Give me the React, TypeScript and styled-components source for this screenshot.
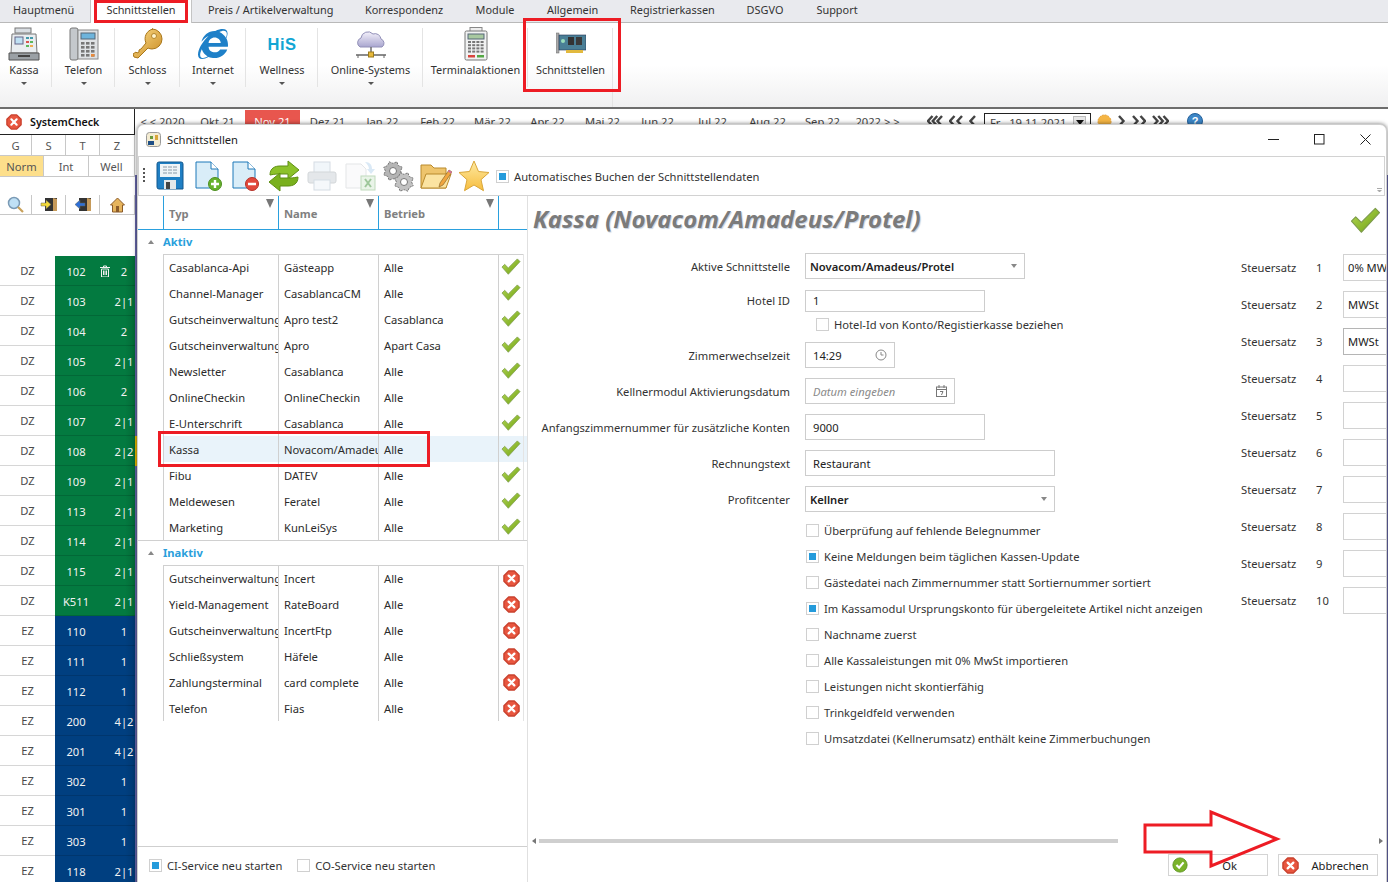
import React from "react";
import styled, { createGlobalStyle } from "styled-components";
import { FaInternetExplorer } from "react-icons/fa";

const Global = createGlobalStyle`
  html, body { margin: 0; padding: 0; background: #fff; overflow: hidden; }
  * { box-sizing: border-box; }
  body { font-family: "Noto Sans", "Open Sans", sans-serif; font-size: 11.2px; color: #333; }
`;

const Page = styled.div`
  position: relative;
  width: 1388px;
  height: 882px;
  overflow: hidden;
  display: flex;
  flex-direction: column;
`;

/* ---------- tabs + ribbon ---------- */
const TabBar = styled.div`
  display: flex;
  flex: none;
  height: 23px;
  background: #e9eaee;
  border-bottom: 1px solid #b9b9b9;
  padding-left: 13px;
  font-size: 10.9px;
`;
const Tab = styled.div<{ $w: number; $active?: boolean }>`
  width: ${(p) => p.$w}px;
  height: ${(p) => (p.$active ? 23 : 22)}px;
  margin-right: 32px;
  line-height: 20px;
  text-align: center;
  white-space: nowrap;
  color: #333;
  ${(p) => p.$active && `background:#fff; margin-left:-16px; margin-right:16px; width:${p.$w + 32}px; border-left:1px solid #c4c4c4; border-right:1px solid #c4c4c4;`}
`;
const Ribbon = styled.div`
  display: flex;
  flex: none;
  height: 86px;
  background: linear-gradient(#fff 0, #fff 50%, #f0f0f1 100%);
  padding-top: 3px;
  border-bottom: 2px solid #6d6d6d;
  font-size: 10.9px;
`;
const RibbonItem = styled.div<{ $w: number; $tall?: boolean; $pr?: number }>`
  width: ${(p) => p.$w}px;
  padding-right: ${(p) => p.$pr ?? 0}px;
  display: flex;
  flex-direction: column;
  align-items: center;
  position: relative;
  white-space: nowrap;
  &::after {
    content: "";
    position: absolute;
    right: 0;
    top: 2px;
    bottom: ${(p) => (p.$tall ? 0 : 20)}px;
    width: 1px;
    background: #e4e4e4;
  }
`;
const RibbonIcon = styled.div`
  height: 36px;
  display: flex;
  align-items: center;
  justify-content: center;
`;
const RibbonLabel = styled.div`
  line-height: 16px;
  color: #333;
`;
const Caret = styled.div`
  width: 0;
  height: 0;
  margin-top: 4px;
  border-left: 3px solid transparent;
  border-right: 3px solid transparent;
  border-top: 3px solid #555;
`;
const HisLogo = styled.span`
  font-family: "Liberation Sans", sans-serif;
  font-weight: 700;
  font-size: 16.5px;
  color: #12a5d4;
  letter-spacing: 0.5px;
`;

/* ---------- background ---------- */
const Main = styled.div`
  flex: 1;
  display: flex;
  min-height: 0;
`;
const Side = styled.aside`
  width: 135px;
  display: flex;
  flex-direction: column;
  flex: none;
  & > * { flex: none; }
`;
const SideHead = styled.div`
  height: 26px;
  display: flex;
  align-items: center;
  gap: 8px;
  padding-left: 6px;
  font-weight: 600;
  font-size: 10.7px;
  color: #111;
  border-right: 1px solid #222;
  border-bottom: 1px solid #222;
`;
const SideRow = styled.div<{ $h: number; $cols: string }>`
  height: ${(p) => p.$h}px;
  display: grid;
  grid-template-columns: ${(p) => p.$cols};
  border-bottom: 1px solid #c8c8c8;
`;
const SideCell = styled.div<{ $on?: boolean }>`
  display: flex;
  align-items: center;
  justify-content: center;
  color: #555;
  border-right: 1px solid #c8c8c8;
  background: ${(p) => (p.$on ? "#fddf8b" : "transparent")};
`;
const SideGap = styled.div<{ $h: number }>`
  height: ${(p) => p.$h}px;
`;
const Room = styled.div`
  height: 30px;
  display: grid;
  grid-template-columns: 55px 42px 16px 22px;
  border-bottom: 1px solid #d6d6d6;
  position: relative;
`;
const RoomKind = styled.div`
  display: flex;
  align-items: center;
  justify-content: center;
  color: #4a4a4a;
`;
const RoomCell = styled.div<{ $bg: string }>`
  display: flex;
  align-items: center;
  justify-content: center;
  color: #f2f2f2;
  background: ${(p) => p.$bg};
  margin-bottom: -1px;
  box-shadow: inset 0 -1px rgba(0, 0, 0, 0.14);
`;
const Marker = styled.div`
  position: absolute;
  top: 0;
  right: -3px;
  width: 3px;
  height: 30px;
  background: #e6b800;
`;
const Cal = styled.div`
  flex: 1;
  display: flex;
  flex-direction: column;
`;
const CalStrip = styled.div`
  height: 66px;
  display: flex;
  padding-top: 4px;
  background: #fff;
  align-items: flex-start;
`;
const Month = styled.div<{ $on?: boolean }>`
  width: 55px;
  height: 30px;
  margin-top: -3px;
  padding-top: 3px;
  line-height: 17px;
  text-align: center;
  white-space: nowrap;
  color: ${(p) => (p.$on ? "#fff" : "#444")};
  background: ${(p) => (p.$on ? "#e8564e" : "transparent")};
`;
const CalNav = styled.div`
  display: flex;
  align-items: center;
  gap: 6px;
  margin-left: 22px;
  margin-top: 1px;
  height: 14px;
`;
const DateBox = styled.div`
  width: 107px;
  height: 20px;
  margin: 4px 0 0 2px;
  border: 1px solid #222;
  padding: 1px 5px;
  color: #444;
  display: flex;
  justify-content: space-between;
  white-space: pre;
`;
const DateDrop = styled.span`
  width: 13px;
  height: 13px;
  background: #e6e6e6;
  border: 1px solid #bbb;
  display: flex;
  align-items: center;
  justify-content: center;
  margin: 1px -1px 0 0;
  &::after {
    content: "";
    border-left: 4px solid transparent;
    border-right: 4px solid transparent;
    border-top: 5px solid #111;
  }
`;
const HelpSlot = styled.div`
  margin-left: 12px;
  display: flex;
`;
const Grid = styled.div`
  flex: 1;
  background: #6667ab;
`;

/* ---------- dialog ---------- */
const Dialog = styled.section`
  position: absolute;
  left: 137px;
  top: 124px;
  width: 1250px;
  height: 770px;
  background: #fff;
  border: 1px solid #cfcfcf;
  border-radius: 7px 7px 0 0;
  box-shadow: 0 0 4px rgba(0, 0, 0, 0.55);
  display: flex;
  flex-direction: column;
  overflow: hidden;
`;
const TitleBar = styled.header`
  height: 31px;
  display: flex;
  align-items: center;
  padding: 0 0 2px 8px;
  gap: 6px;
  color: #222;
  flex: none;
`;
const TitleText = styled.span`
  flex: 1;
`;
const WinGroup = styled.div`
  display: flex;
  margin-right: -2px;
`;
const WinBtn = styled.div`
  width: 46px;
  height: 28px;
  display: flex;
  align-items: center;
  justify-content: center;
`;
const Toolbar = styled.div`
  height: 40px;
  margin-right: 1px;
  flex: none;
  display: flex;
  align-items: center;
  border: 1px solid #d2d2d2;
  padding-left: 4px;
  position: relative;
`;
const Grip = styled.div`
  width: 2px;
  height: 16px;
  margin-right: 11px;
  background: repeating-linear-gradient(#555 0 2px, transparent 2px 4px);
`;
const ToolIcon = styled.div<{ $w: number; $ml?: number }>`
  width: ${(p) => p.$w}px;
  height: 32px;
  flex: none;
  display: flex;
  align-items: center;
  justify-content: center;
  margin: 0 6px 0 ${(p) => p.$ml ?? 0}px;
`;
const Overflow = styled.div`
  position: absolute;
  right: 2px;
  bottom: 3px;
  width: 5px;
  height: 4px;
  border-top: 1px solid #aaa;
  &::after {
    content: "";
    display: block;
    margin-top: 1px;
    border-left: 2.5px solid transparent;
    border-right: 2.5px solid transparent;
    border-top: 2.5px solid #aaa;
  }
`;
const Body = styled.div`
  flex: 1;
  display: flex;
  min-height: 0;
`;
const ListPane = styled.div`
  width: 390px;
  flex: none;
  display: flex;
  flex-direction: column;
  border-right: 1px solid #e0e0e0;
`;
const ListArea = styled.div`
  height: 650px;
  flex: none;
`;
const cols = "25px 115px 100px 120px 26px";
const HeadRow = styled.div`
  height: 34px;
  display: grid;
  grid-template-columns: ${cols};
  border-bottom: 1px solid #2aa0de;
`;
const HeadCell = styled.div<{ $rule?: boolean }>`
  position: relative;
  padding: 10px 0 0 5px;
  font-weight: 700;
  color: #808080;
  border-left: ${(p) => (p.$rule ? "1px solid #2aa0de" : "0")};
`;
const Funnel = styled.div`
  position: absolute;
  right: 4px;
  top: 3px;
  width: 0;
  height: 0;
  border-left: 4px solid transparent;
  border-right: 4px solid transparent;
  border-top: 9px solid #777;
`;
const GroupRow = styled.div`
  height: 24px;
  display: flex;
  align-items: center;
  padding: 0 0 1px 10px;
  gap: 9px;
  font-weight: 700;
  color: #2a9fdc;
`;
const Fold = styled.div`
  width: 0;
  height: 0;
  border-left: 3px solid transparent;
  border-right: 3px solid transparent;
  border-bottom: 4px solid #888;
`;
const Row = styled.div<{ $sel?: boolean }>`
  height: 26px;
  display: grid;
  grid-template-columns: ${cols};
  background: ${(p) => (p.$sel ? "linear-gradient(90deg,#fff 0 25px,#e9f3fa 25px)" : "transparent")};
`;
const GroupBody = styled.div<{ $last?: boolean }>`
  ${(p) => !p.$last && "border-bottom: 1px solid #d0d0d0;"}
  & > div:first-child > div:not(:first-child) { box-shadow: inset 0 1px #d0d0d0; }
`;
const Cell = styled.div<{ $first?: boolean }>`
  padding: 1px 0 0 5px;
  line-height: 26px;
  white-space: nowrap;
  overflow: hidden;
  color: #2b2b2b;
  border-left: ${(p) => (p.$first ? "0" : "1px solid #d0d0d0")};
`;
const StateCell = styled.div`
  border-left: 1px solid #d0d0d0;
  border-right: 1px solid #e4e4e4;
  display: flex;
  align-items: center;
  justify-content: center;
`;
const BottomBar = styled.div`
  height: 36px;
  border-top: 1px solid #cfcfcf;
  display: flex;
  align-items: center;
  padding: 2px 0 0 11px;
  gap: 15px;
`;
const Check = styled.label`
  display: flex;
  align-items: center;
  gap: 5px;
  color: #333;
  white-space: nowrap;
`;
const Box = styled.span<{ $on?: boolean }>`
  width: 13px;
  height: 13px;
  flex: none;
  border: 1px solid #d0d0d0;
  background: #fff;
  display: flex;
  align-items: center;
  justify-content: center;
  &::after {
    content: "";
    width: 7px;
    height: 7px;
    background: ${(p) => (p.$on ? "#259bdb" : "transparent")};
  }
`;

const FormPane = styled.div`
  flex: 1;
  display: flex;
  flex-direction: column;
  min-width: 0;
  position: relative;
`;
const Heading = styled.div`
  height: 52px;
  padding: 5px 0 0 5px;
  display: flex;
  justify-content: space-between;
  font-size: 24px;
  font-weight: 700;
  font-style: italic;
  color: #7b7b7b;
  text-shadow: 1px 1px 1px #c3d1e2;
  line-height: 36px;
`;
const BigCheck = styled.div`
  margin: 6px 5px 0 0;
`;
const FormGrid = styled.div`
  display: flex;
  flex: none;
  height: 589px;
`;
const FormCol = styled.div`
  width: 712px;
  flex: none;
`;
const FieldRow = styled.div<{ $h?: number; $mt?: number }>`
  height: ${(p) => p.$h ?? 36}px;
  margin-top: ${(p) => p.$mt ?? 0}px;
  display: flex;
  align-items: center;
`;
const FieldLabel = styled.div`
  width: 262px;
  flex: none;
  text-align: right;
  margin-right: 15px;
  white-space: nowrap;
  color: #333;
`;
const Input = styled.div<{ $w: number; $h?: number; $bold?: boolean; $muted?: boolean }>`
  width: ${(p) => p.$w}px;
  height: ${(p) => p.$h ?? 26}px;
  border: 1px solid #cdcdcd;
  padding: 0 7px;
  display: flex;
  align-items: center;
  justify-content: space-between;
  color: ${(p) => (p.$muted ? "#8a8a8a" : "#222")};
  font-weight: ${(p) => (p.$bold ? 600 : 400)};
  font-style: ${(p) => (p.$muted ? "italic" : "normal")};
  padding-left: ${(p) => (p.$bold ? 4 : 7)}px;
`;
const DropTri = styled.span`
  border-left: 3px solid transparent;
  border-right: 3px solid transparent;
  border-top: 4px solid #888;
`;
const Indent = styled.div`
  margin-left: 288px;
`;
const OptRow = styled.div`
  height: 26px;
  display: flex;
  align-items: center;
  padding-left: 278px;
`;
const TaxCol = styled.div`
  flex: 1;
  padding: 5px 0 0 1px;
  overflow: hidden;
`;
const TaxRow = styled.div`
  height: 37px;
  display: flex;
  align-items: center;
  padding-bottom: 9px;
  white-space: nowrap;
`;
const TaxLabel = styled.div`
  width: 75px;
  flex: none;
  color: #333;
`;
const TaxNum = styled.div`
  width: 27px;
  flex: none;
  color: #333;
`;
const TaxBox = styled.div<{ $dark?: boolean }>`
  width: 60px;
  height: 27px;
  flex: none;
  padding-left: 4px;
  line-height: 26px;
  color: #222;
  border: 1px solid ${(p) => (p.$dark ? "#b5b5b5" : "#d2d2d2")};
`;
const ScrollBar = styled.div`
  height: 8px;
  margin: 0 3px 0 4px;
  display: flex;
  align-items: center;
  justify-content: space-between;
`;
const ScrollArrow = styled.span<{ $right?: boolean }>`
  width: 0;
  height: 0;
  border-top: 3px solid transparent;
  border-bottom: 3px solid transparent;
  ${(p) => (p.$right ? "border-left: 4px solid #777;" : "border-right: 4px solid #777;")}
`;
const ScrollThumb = styled.span`
  height: 4px;
  width: 579px;
  margin: 0 auto 0 3px;
  background: #cfcfcf;
`;
const ButtonBar = styled.div`
  display: flex;
  justify-content: flex-end;
  gap: 10px;
  padding: 9px 8px 0 0;
`;
const Btn = styled.div`
  width: 100px;
  height: 22px;
  border: 1px solid #d4d4d4;
  display: flex;
  align-items: center;
  padding-left: 3px;
  color: #222;
  background: #fff;
`;
const BtnText = styled.span`
  flex: 1;
  text-align: center;
  padding-left: 4px;
`;

/* ---------- annotations ---------- */
const RedFrame = styled.div<{ $x: number; $y: number; $w: number; $h: number }>`
  position: absolute;
  left: ${(p) => p.$x}px;
  top: ${(p) => p.$y}px;
  width: ${(p) => p.$w}px;
  height: ${(p) => p.$h}px;
  border: 3px solid #ed1c24;
  pointer-events: none;
`;
const ArrowWrap = styled.svg`
  position: absolute;
  left: 1140px;
  top: 806px;
`;

/* ---------- icons ---------- */
const CheckIcon = ({ size = 20 }: { size?: number }) => (
  <svg width={size} height={size * 0.86} viewBox="0 0 22 19">
    <defs>
      <linearGradient id="ck" x1="0" y1="0" x2="1" y2="1">
        <stop offset="0" stopColor="#b5d955" />
        <stop offset="1" stopColor="#6d9f12" />
      </linearGradient>
    </defs>
    <path d="M1 10l3-3 4 4L18 1l3 3L8 18z" fill="url(#ck)" stroke="#7c9a4a" strokeWidth=".8" strokeLinejoin="round" />
  </svg>
);
const XCircle = ({ size = 17 }: { size?: number }) => (
  <svg width={size} height={size} viewBox="0 0 18 18">
    <path d="M6 1h6l5 5v6l-5 5H6l-5-5V6z" fill="#e8563f" stroke="#c9412e" strokeLinejoin="round" strokeWidth="1.5" />
    <path d="M6 6l6 6M12 6l-6 6" stroke="#fff" strokeWidth="2.4" strokeLinecap="round" />
  </svg>
);
const OkCircle = () => (
  <svg width="16" height="16" viewBox="0 0 18 18">
    <circle cx="9" cy="9" r="8" fill="#7ab32a" stroke="#5d9420" />
    <path d="M5 9l3 3 5-6" stroke="#fff" strokeWidth="2.4" fill="none" />
  </svg>
);
const Kassa = () => (
  <svg width="32" height="34" viewBox="0 0 32 34">
    <rect x="7" y="1" width="16" height="5" fill="#d8dde2" stroke="#777" />
    <path d="M4 7h24l1 19H3z" fill="#e9edf0" stroke="#777" />
    <rect x="7" y="10" width="8" height="7" fill="#bfe0f3" stroke="#668" />
    <g fill="#49a">
      <rect x="18" y="10" width="3" height="2" /><rect x="22" y="10" width="3" height="2" />
    </g>
    <g fill="#d9534f"><rect x="18" y="14" width="3" height="2" /></g>
    <g fill="#5cb85c"><rect x="22" y="14" width="3" height="2" /><rect x="18" y="18" width="3" height="2" /></g>
    <g fill="#f0ad4e"><rect x="22" y="18" width="3" height="2" /></g>
    <path d="M1 26h30v7H1z" fill="#9aa0a5" stroke="#555" />
    <rect x="10" y="28" width="12" height="2" fill="#444" />
  </svg>
);
const Telefon = () => (
  <svg width="30" height="34" viewBox="0 0 30 34">
    <rect x="1" y="1" width="8" height="32" rx="2" fill="#c4c8cc" stroke="#777" />
    <rect x="9" y="3" width="20" height="29" fill="#dfe2e5" stroke="#888" />
    <rect x="12" y="6" width="14" height="6" fill="#6db4dc" stroke="#567" />
    <g fill="#777">
      {[0, 1, 2, 3].map((r) => [0, 1, 2].map((c) => <rect key={`${r}${c}`} x={12 + c * 5} y={15 + r * 4} width="3.5" height="2.6" />))}
    </g>
    <rect x="22" y="27" width="3.5" height="2.6" fill="#e8893a" />
  </svg>
);
const Key = () => (
  <svg width="30" height="32" viewBox="0 0 30 32">
    <defs>
      <linearGradient id="kg" x1="0" y1="0" x2="1" y2="1">
        <stop offset="0" stopColor="#fbdc8a" /><stop offset="1" stopColor="#c98a20" />
      </linearGradient>
    </defs>
    <path d="M19 1a10 10 0 0 1 0 20 10 10 0 0 1-4-1L5 30l-4-1-1-3 3-2 1 1 2-1v-2l2-1 5-6a10 10 0 0 1 7-14z" fill="url(#kg)" stroke="#a97618" />
    <circle cx="21" cy="8" r="2.5" fill="#fff3cc" stroke="#b5862b" />
  </svg>
);
const Cloud = () => (
  <svg width="34" height="32" viewBox="0 0 34 32">
    <defs>
      <linearGradient id="cg" x1="0" y1="0" x2="0" y2="1">
        <stop offset="0" stopColor="#f4f1fb" /><stop offset="1" stopColor="#a9a6cf" />
      </linearGradient>
    </defs>
    <path d="M6 19a5 5 0 0 1 1-9 7 7 0 0 1 12-4 6 6 0 0 1 8 5 4.500 4.500 0 0 1 1 8z" fill="url(#cg)" stroke="#9290b8" />
    <path d="M17 19v7M2 27h30" stroke="#666" strokeWidth="1.4" />
    <path d="M4 27v3M30 27v3" stroke="#666" />
    <rect x="14.500" y="24" width="5" height="5" fill="#e7b93b" stroke="#9b7a1c" />
  </svg>
);
const Terminal = () => (
  <svg width="24" height="34" viewBox="0 0 24 34">
    <rect x="6" y="0.500" width="12" height="5" fill="#eee" stroke="#888" />
    <rect x="1" y="4" width="22" height="29" rx="1.500" fill="#f1f2f2" stroke="#777" />
    <rect x="4" y="7" width="16" height="5" fill="#a8c9a0" stroke="#567" />
    <g fill="#777">
      {[0, 1, 2, 3].map((r) => [0, 1, 2, 3].map((c) => <rect key={`${r}${c}`} x={4 + c * 4.200} y={14 + r * 3.200} width="3" height="2" />))}
    </g>
    <rect x="4" y="28" width="7" height="2.500" fill="#d9463e" />
    <rect x="13" y="28" width="7" height="2.500" fill="#55a845" />
  </svg>
);
const Card = () => (
  <svg width="30" height="24" viewBox="0 0 30 24">
    <rect x="0" y="1" width="3" height="20" fill="#aaa" stroke="#666" strokeWidth=".5" />
    <rect x="3" y="3" width="27" height="15" fill="#4a7f96" stroke="#235" strokeWidth=".6" />
    <rect x="12" y="5" width="6" height="8" fill="#333" />
    <rect x="20" y="5" width="6" height="8" fill="#3a3a3a" />
    <circle cx="7" cy="9" r="2" fill="#9db" />
    <rect x="10" y="18" width="17" height="3" fill="#e2b93e" />
  </svg>
);
const Floppy = () => (
  <svg width="28" height="30" viewBox="0 0 28 30">
    <path d="M1 3a2 2 0 0 1 2-2h22a2 2 0 0 1 2 2v25H3a2 2 0 0 1-2-2z" fill="#1f7fc4" stroke="#12598e" />
    <rect x="4" y="3" width="20" height="13" fill="#eef3f7" />
    <path d="M7 6h14M7 9h14M7 12h14" stroke="#8a9aa8" strokeDasharray="4 1" />
    <rect x="8" y="19" width="12" height="9" fill="#e4e8ea" />
    <rect x="10" y="21" width="4" height="7" fill="#444" />
  </svg>
);
const Doc = ({ badge }: { badge: "plus" | "minus" }) => (
  <svg width="28" height="30" viewBox="0 0 28 30">
    <path d="M1 1h15l7 7v19H1z" fill="#d9edf8" stroke="#1c78b8" />
    <path d="M16 1v7h7" fill="#fff" stroke="#1c78b8" />
    <circle cx="20" cy="23" r="6.500" fill={badge === "plus" ? "#67b22d" : "#e2483c"} stroke={badge === "plus" ? "#4d8f1f" : "#b5342a"} />
    <path d={badge === "plus" ? "M16 23h8M20 19v8" : "M16 23h8"} stroke="#fff" strokeWidth="2.400" />
  </svg>
);
const Refresh = () => (
  <svg width="32" height="32" viewBox="0 0 32 32">
    <path d="M2 15C2 8 7 6 12 6h8V1l11 9-11 9v-5h-7c-4 0-6 0-11 1z" fill="#8cc22a" stroke="#5f8f14" />
    <path d="M30 17c0 7-5 9-10 9h-8v5L1 22l11-9v5h7c4 0 6 0 11-1z" fill="#79b01d" stroke="#5f8f14" />
  </svg>
);
const Printer = () => (
  <svg width="30" height="30" viewBox="0 0 30 30" opacity=".55">
    <rect x="7" y="1" width="16" height="11" fill="#e7eff6" stroke="#b4c2cf" />
    <rect x="1" y="11" width="28" height="11" rx="2" fill="#cfd5da" stroke="#b0b6bb" />
    <rect x="7" y="19" width="16" height="10" fill="#eef4f9" stroke="#b4c2cf" />
  </svg>
);
const DocXls = () => (
  <svg width="32" height="30" viewBox="0 0 32 30" opacity=".55">
    <path d="M1 3h15l5 5v19H1z" fill="#f6f7f8" stroke="#cfd3d6" />
    <path d="M20 1c5 0 7 3 7 7h3l-4 5-4-5h2c0-3-2-5-4-7z" fill="#bcd8ef" />
    <rect x="16" y="15" width="14" height="14" fill="#d8ecd6" stroke="#8cbe88" />
    <path d="M20 18l6 8M26 18l-6 8" stroke="#4f9a4a" strokeWidth="2" />
  </svg>
);
const gearPath = (cx: number, cy: number, r: number) => {
  const pts: string[] = [];
  for (let i = 0; i < 16; i++) {
    const a = (i / 16) * Math.PI * 2;
    const rr = i % 2 ? r : r * 0.76;
    pts.push(`${(cx + rr * Math.cos(a)).toFixed(1)},${(cy + rr * Math.sin(a)).toFixed(1)}`);
  }
  return pts.join(" ");
};
const Gears = () => (
  <svg width="32" height="32" viewBox="0 0 32 32">
    <polygon points={gearPath(11, 11, 10)} fill="#b5b5b5" stroke="#777" strokeDasharray="2 1" />
    <circle cx="11" cy="11" r="3.500" fill="#fff" stroke="#777" />
    <polygon points={gearPath(22, 22, 10)} fill="#c2c2c2" stroke="#777" strokeDasharray="2 1" />
    <circle cx="22" cy="22" r="3.500" fill="#fff" stroke="#777" />
  </svg>
);
const Folder = () => (
  <svg width="32" height="30" viewBox="0 0 32 30">
    <path d="M1 4h10l3 3h12v20H1z" fill="#eec46c" stroke="#b98a2c" />
    <path d="M1 27l5-14h25l-5 14z" fill="#fbe3a1" stroke="#b98a2c" />
    <path d="M20 22L29 9l3 2-9 13-4 2z" fill="#f1a640" stroke="#8b6a2a" strokeWidth=".7" />
    <path d="M29 9l3 2-1 1.500-3-2z" fill="#d06fa6" />
  </svg>
);
const Star = () => (
  <svg width="32" height="32" viewBox="0 0 32 32">
    <defs>
      <linearGradient id="sg" x1="0" y1="0" x2="0" y2="1">
        <stop offset="0" stopColor="#fdeaa3" /><stop offset="1" stopColor="#f7bd3e" />
      </linearGradient>
    </defs>
    <path d="M16 1l4.500 10.500L31 12.500l-8 7.200 2.500 11L16 25l-9.500 5.700 2.500-11-8-7.200 10.500-1z" fill="url(#sg)" stroke="#d9a63a" strokeLinejoin="round" />
  </svg>
);
const TitleIcon = () => (
  <svg width="15" height="15" viewBox="0 0 15 15">
    <rect x=".5" y=".5" width="14" height="14" rx="3" fill="#f4ecd2" stroke="#999" />
    <rect x="2" y="9" width="6" height="4" fill="#1f4f86" />
    <rect x="9" y="3" width="3" height="5" fill="#d9a63a" />
    <rect x="4" y="4" width="3" height="3" fill="#6a9a3a" />
  </svg>
);
const Lens = () => (
  <svg width="17" height="17" viewBox="0 0 17 17">
    <circle cx="7" cy="7" r="5.500" fill="#bfe0f5" stroke="#7a9ab5" strokeWidth="1.500" />
    <path d="M11 11l5 5" stroke="#c9a15a" strokeWidth="2.200" />
  </svg>
);
const DoorIcon = ({ color, flip }: { color: string; flip?: boolean }) => (
  <svg width="18" height="15" viewBox="0 0 18 15">
    <rect x="5" y="1" width="12" height="13" fill="#333" />
    <path d="M13 1l4 1v12l-4 0z" fill="#c69a5a" />
    <path d={flip ? "M1 7.500L6 3v3h5v3H6v3z" : "M11 7.500L6 3v3H1v3h5v3z"} fill={color} stroke="#665" strokeWidth=".5" />
  </svg>
);
const House = () => (
  <svg width="15" height="16" viewBox="0 0 15 16">
    <path d="M7.500 1L14.500 8h-2v7h-10V8h-2z" fill="#e6b45c" stroke="#8a5a28" />
    <rect x="6" y="9" width="3" height="6" fill="#8a5a28" />
  </svg>
);
const Trash = () => (
  <svg width="10" height="12" viewBox="0 0 10 12">
    <path d="M0 2.500h10M3.500 2.500V1h3v1.500M1.500 4h7v8h-7z" fill="none" stroke="#f0f0f0" />
    <path d="M3.500 5.500V10M5 5.500V10M6.500 5.500V10" stroke="#f0f0f0" />
  </svg>
);
const Chev = ({ n, right, w }: { n: number; right?: boolean; w: number }) => {
  const step = n > 1 ? (w - 6.5) / (n - 1) : 0;
  return (
    <svg width={w} height="12" viewBox={`0 0 ${w} 12`}>
      {Array.from({ length: n }).map((_, i) => (
        <path
          key={i}
          d={right ? `M${1 + i * step} 1l4.500 5-4.500 5` : `M${w - 1 - i * step} 1l-4.500 5 4.500 5`}
          fill="none"
          stroke="#444"
          strokeWidth="2.400"
        />
      ))}
    </svg>
  );
};
const Sun = () => (
  <svg width="15" height="15" viewBox="0 0 15 15">
    <circle cx="7.500" cy="7.500" r="6.500" fill="#f5b544" stroke="#e39a2a" strokeDasharray="2 1" />
  </svg>
);
const Help = () => (
  <svg width="16" height="16" viewBox="0 0 16 16">
    <circle cx="8" cy="8" r="7.500" fill="#3d86c6" stroke="#24609a" />
    <text x="8" y="12" textAnchor="middle" fontSize="11" fontWeight="700" fill="#fff" fontFamily="Liberation Sans, sans-serif">?</text>
  </svg>
);
const Clock = () => (
  <svg width="12" height="12" viewBox="0 0 12 12">
    <circle cx="6" cy="6" r="5" fill="none" stroke="#888" />
    <path d="M6 3v3h2.500" stroke="#888" fill="none" />
  </svg>
);
const CalIcon = () => (
  <svg width="11" height="12" viewBox="0 0 11 12">
    <rect x=".5" y="2" width="10" height="9.500" fill="none" stroke="#777" />
    <path d="M3 0v3M8 0v3M1 4.500h9" stroke="#777" />
    <path d="M4 6.500h3L5.500 10" stroke="#777" fill="none" />
  </svg>
);

/* ---------- data ---------- */
const tabs: [string, number, boolean?][] = [
  ["Hauptmenü", 61], ["Schnittstellen", 70, true], ["Preis / Artikelverwaltung", 125],
  ["Korrespondenz", 78], ["Module", 40], ["Allgemein", 51], ["Registrierkassen", 84], ["DSGVO", 38], ["Support", 42],
];
const ribbon: { label: string; w: number; icon: React.ReactNode; caret?: boolean; tall?: boolean; pr?: number }[] = [
  { label: "Kassa", w: 52, icon: <Kassa />, caret: true, pr: 4 },
  { label: "Telefon", w: 63, icon: <Telefon />, caret: true },
  { label: "Schloss", w: 65, icon: <Key />, caret: true },
  { label: "Internet", w: 66, icon: <FaInternetExplorer size={30} color="#1e80c8" />, caret: true },
  { label: "Wellness", w: 72, icon: <HisLogo>HiS</HisLogo>, caret: true },
  { label: "Online-Systems", w: 105, icon: <Cloud />, caret: true },
  { label: "Terminalaktionen", w: 105, icon: <Terminal /> },
  { label: "Schnittstellen", w: 85, icon: <Card />, tall: true },
];
const months = ["< < 2020", "Okt 21", "Nov 21", "Dez 21", "Jan 22", "Feb 22", "Mär 22", "Apr 22", "Mai 22", "Jun 22", "Jul 22", "Aug 22", "Sep 22", "2022 > >"];
const greenBg = "#037a40";
const greenEdge = "linear-gradient(90deg,#037a40 55%,#036a37)";
const blueBg = "#003f80";
const blueEdge = "linear-gradient(90deg,#003f80 55%,#003872)";
const rooms: [string, string, string, boolean?][] = [
  ["DZ", "102", "2", true], ["DZ", "103", "2|1"], ["DZ", "104", "2"], ["DZ", "105", "2|1"], ["DZ", "106", "2"],
  ["DZ", "107", "2|1"], ["DZ", "108", "2|2"], ["DZ", "109", "2|1"], ["DZ", "113", "2|1"], ["DZ", "114", "2|1"],
  ["DZ", "115", "2|1"], ["DZ", "K511", "2|1"], ["EZ", "110", "1"], ["EZ", "111", "1"], ["EZ", "112", "1"],
  ["EZ", "200", "4|2"], ["EZ", "201", "4|2"], ["EZ", "302", "1"], ["EZ", "301", "1"], ["EZ", "303", "1"], ["EZ", "118", "2|1"],
];
const aktiv = [
  ["Casablanca-Api", "Gästeapp", "Alle"], ["Channel-Manager", "CasablancaCM", "Alle"],
  ["Gutscheinverwaltung", "Apro test2", "Casablanca"], ["Gutscheinverwaltung", "Apro", "Apart Casa"],
  ["Newsletter", "Casablanca", "Alle"], ["OnlineCheckin", "OnlineCheckin", "Alle"],
  ["E-Unterschrift", "Casablanca", "Alle"], ["Kassa", "Novacom/Amadeus/Protel", "Alle"],
  ["Fibu", "DATEV", "Alle"], ["Meldewesen", "Feratel", "Alle"], ["Marketing", "KunLeiSys", "Alle"],
];
const inaktiv = [
  ["Gutscheinverwaltung", "Incert", "Alle"], ["Yield-Management", "RateBoard", "Alle"],
  ["Gutscheinverwaltung", "IncertFtp", "Alle"], ["Schließsystem", "Häfele", "Alle"],
  ["Zahlungsterminal", "card complete", "Alle"], ["Telefon", "Fias", "Alle"],
];
const options: [string, boolean][] = [
  ["Überprüfung auf fehlende Belegnummer", false],
  ["Keine Meldungen beim täglichen Kassen-Update", true],
  ["Gästedatei nach Zimmernummer statt Sortiernummer sortiert", false],
  ["Im Kassamodul Ursprungskonto für übergeleitete Artikel nicht anzeigen", true],
  ["Nachname zuerst", false],
  ["Alle Kassaleistungen mit 0% MwSt importieren", false],
  ["Leistungen nicht skontierfähig", false],
  ["Trinkgeldfeld verwenden", false],
  ["Umsatzdatei (Kellnerumsatz) enthält keine Zimmerbuchungen", false],
];
const taxes = ["0% MWSt", "MWSt", "MWSt", "", "", "", "", "", "", ""];

const ListRows = ({ rows, ok, sel }: { rows: string[][]; ok: boolean; sel?: string }) => (
  <>
    {rows.map((r, i) => (
      <Row key={i} $sel={r[0] === sel}>
        <Cell $first />
        {r.map((c, j) => (
          <Cell key={j}>{c}</Cell>
        ))}
        <StateCell>{ok ? <CheckIcon /> : <XCircle />}</StateCell>
      </Row>
    ))}
  </>
);

export default function App() {
  return (
    <Page>
      <Global />
      <TabBar>
        {tabs.map(([t, w, a]) => (
          <Tab key={t} $w={w} $active={a}>{t}</Tab>
        ))}
      </TabBar>
      <Ribbon>
        {ribbon.map((r) => (
          <RibbonItem key={r.label} $w={r.w} $tall={r.tall} $pr={r.pr}>
            <RibbonIcon>{r.icon}</RibbonIcon>
            <RibbonLabel>{r.label}</RibbonLabel>
            {r.caret && <Caret />}
          </RibbonItem>
        ))}
      </Ribbon>
      <Main>
        <Side>
          <SideHead><XCircle size={16} />SystemCheck</SideHead>
          <SideRow $h={21} $cols="32px 34px 34px 35px">
            {["G", "S", "T", "Z"].map((c) => <SideCell key={c}>{c}</SideCell>)}
          </SideRow>
          <SideRow $h={21} $cols="44px 45px 46px">
            <SideCell $on>Norm</SideCell><SideCell>Int</SideCell><SideCell>Well</SideCell>
          </SideRow>
          <SideGap $h={18} />
          <SideRow $h={20} $cols="32px 34px 34px 35px">
            <SideCell><Lens /></SideCell>
            <SideCell><DoorIcon color="#f2d93a" /></SideCell>
            <SideCell><DoorIcon color="#2d6fd8" flip /></SideCell>
            <SideCell><House /></SideCell>
          </SideRow>
          <SideGap $h={41} />
          {rooms.map(([k, n, p, t], i) => (
            <Room key={n + i}>
              <RoomKind>{k}</RoomKind>
              <RoomCell $bg={k === "DZ" ? greenBg : blueBg}>{n}</RoomCell>
              <RoomCell $bg={k === "DZ" ? greenBg : blueBg}>{t && <Trash />}</RoomCell>
              <RoomCell $bg={k === "DZ" ? greenEdge : blueEdge}>{p}</RoomCell>
              {n === "108" && <Marker />}
            </Room>
          ))}
        </Side>
        <Cal>
          <CalStrip>
            {months.map((m) => <Month key={m} $on={m === "Nov 21"}>{m}</Month>)}
            <CalNav>
              <Chev n={3} w={16} />
              <Chev n={2} w={14} />
              <Chev n={1} w={7} />
              <DateBox>Fr   19.11.2021<DateDrop /></DateBox>
              <Sun />
              <Chev n={1} right w={8} />
              <Chev n={2} right w={14} />
              <Chev n={3} right w={17} />
              <HelpSlot><Help /></HelpSlot>
            </CalNav>
          </CalStrip>
          <Grid />
        </Cal>
      </Main>

      <Dialog>
        <TitleBar>
          <TitleIcon />
          <TitleText>Schnittstellen</TitleText>
          <WinGroup>
            <WinBtn>
              <svg width="11" height="11" viewBox="0 0 11 11"><path d="M0 5.500h11" stroke="#222" strokeWidth="1.2" /></svg>
            </WinBtn>
            <WinBtn>
              <svg width="11" height="11" viewBox="0 0 11 11"><rect x=".5" y=".5" width="9.500" height="9.500" fill="none" stroke="#222" /></svg>
            </WinBtn>
            <WinBtn>
              <svg width="11" height="11" viewBox="0 0 11 11"><path d="M.5.500l10 10M10.500.500l-10 10" stroke="#222" /></svg>
            </WinBtn>
          </WinGroup>
        </TitleBar>
        <Toolbar>
          <Grip />
          <ToolIcon $w={28}><Floppy /></ToolIcon>
          <ToolIcon $w={28} $ml={5}><Doc badge="plus" /></ToolIcon>
          <ToolIcon $w={28} $ml={3}><Doc badge="minus" /></ToolIcon>
          <ToolIcon $w={32} $ml={2}><Refresh /></ToolIcon>
          <ToolIcon $w={30} $ml={1}><Printer /></ToolIcon>
          <ToolIcon $w={32} $ml={2}><DocXls /></ToolIcon>
          <ToolIcon $w={32} $ml={-1}><Gears /></ToolIcon>
          <ToolIcon $w={32}><Folder /></ToolIcon>
          <ToolIcon $w={32}><Star /></ToolIcon>
          <Check><Box $on />Automatisches Buchen der Schnittstellendaten</Check>
          <Overflow />
        </Toolbar>
        <Body>
          <ListPane>
            <ListArea>
              <HeadRow>
                <HeadCell />
                <HeadCell $rule>Typ<Funnel /></HeadCell>
                <HeadCell $rule>Name<Funnel /></HeadCell>
                <HeadCell $rule>Betrieb<Funnel /></HeadCell>
                <HeadCell $rule />
              </HeadRow>
              <GroupRow><Fold />Aktiv</GroupRow>
              <GroupBody><ListRows rows={aktiv} ok sel="Kassa" /></GroupBody>
              <GroupRow><Fold />Inaktiv</GroupRow>
              <GroupBody $last><ListRows rows={inaktiv} ok={false} /></GroupBody>
            </ListArea>
            <BottomBar>
              <Check><Box $on />CI-Service neu starten</Check>
              <Check><Box />CO-Service neu starten</Check>
            </BottomBar>
          </ListPane>
          <FormPane>
            <Heading>
              Kassa (Novacom/Amadeus/Protel)
              <BigCheck><CheckIcon size={31} /></BigCheck>
            </Heading>
            <FormGrid>
              <FormCol>
                <FieldRow>
                  <FieldLabel>Aktive Schnittstelle</FieldLabel>
                  <Input $w={220} $bold>Novacom/Amadeus/Protel<DropTri /></Input>
                </FieldRow>
                <FieldRow $h={33}>
                  <FieldLabel>Hotel ID</FieldLabel>
                  <Input $w={180} $h={22}>1</Input>
                </FieldRow>
                <FieldRow $h={14}><Indent><Check><Box />Hotel-Id von Konto/Registierkasse beziehen</Check></Indent></FieldRow>
                <FieldRow $mt={6}>
                  <FieldLabel>Zimmerwechselzeit</FieldLabel>
                  <Input $w={90}>14:29<Clock /></Input>
                </FieldRow>
                <FieldRow>
                  <FieldLabel>Kellnermodul Aktivierungsdatum</FieldLabel>
                  <Input $w={150} $muted>Datum eingeben<CalIcon /></Input>
                </FieldRow>
                <FieldRow>
                  <FieldLabel>Anfangszimmernummer für zusätzliche Konten</FieldLabel>
                  <Input $w={180}>9000</Input>
                </FieldRow>
                <FieldRow>
                  <FieldLabel>Rechnungstext</FieldLabel>
                  <Input $w={250}>Restaurant</Input>
                </FieldRow>
                <FieldRow>
                  <FieldLabel>Profitcenter</FieldLabel>
                  <Input $w={250} $bold>Kellner<DropTri /></Input>
                </FieldRow>
                {options.map(([t, on]) => (
                  <OptRow key={t}><Check><Box $on={on} />{t}</Check></OptRow>
                ))}
              </FormCol>
              <TaxCol>
                {taxes.map((t, i) => (
                  <TaxRow key={i}>
                    <TaxLabel>Steuersatz</TaxLabel>
                    <TaxNum>{i + 1}</TaxNum>
                    <TaxBox $dark={i === 2}>{t}</TaxBox>
                  </TaxRow>
                ))}
              </TaxCol>
            </FormGrid>
            <ScrollBar><ScrollArrow /><ScrollThumb /><ScrollArrow $right /></ScrollBar>
            <ButtonBar>
              <Btn><OkCircle /><BtnText>Ok</BtnText></Btn>
              <Btn><XCircle /><BtnText>Abbrechen</BtnText></Btn>
            </ButtonBar>
          </FormPane>
        </Body>
      </Dialog>

      <RedFrame $x={94} $y={0} $w={94} $h={23} />
      <RedFrame $x={523} $y={18} $w={98} $h={74} />
      <RedFrame $x={158} $y={431} $w={272} $h={36} />
      <ArrowWrap width="142" height="64" viewBox="0 0 142 64">
        <path d="M5 19h66V6l66 27-66 27V46H5z" fill="none" stroke="#ed1c24" strokeWidth="3" />
      </ArrowWrap>
    </Page>
  );
}
